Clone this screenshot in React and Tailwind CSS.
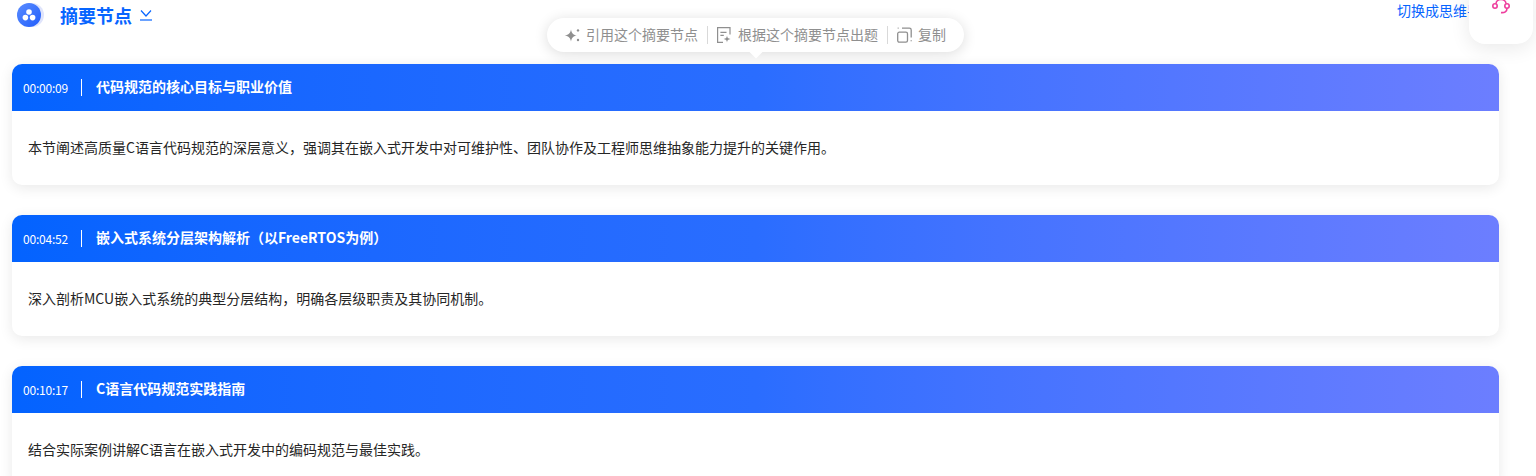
const sections = [
  {
    time: "00:00:09",
    title: "代码规范的核心目标与职业价值",
    text: "本节阐述高质量C语言代码规范的深层意义，强调其在嵌入式开发中对可维护性、团队协作及工程师思维抽象能力提升的关键作用。",
  },
  {
    time: "00:04:52",
    title: "嵌入式系统分层架构解析（以FreeRTOS为例）",
    text: "深入剖析MCU嵌入式系统的典型分层结构，明确各层级职责及其协同机制。",
  },
  {
    time: "00:10:17",
    title: "C语言代码规范实践指南",
    text: "结合实际案例讲解C语言在嵌入式开发中的编码规范与最佳实践。",
  },
];

function LogoIcon() {
  return (
    <div className="relative w-[27px] h-[24px] shrink-0">
      <div className="absolute left-[3px] top-0 w-[24px] h-[24px] rounded-full bg-[#dfe4fb]" />
      <div className="absolute left-0 top-0 w-[24px] h-[24px] rounded-full bg-gradient-to-br from-[#5b8cff] to-[#1f5cfb] flex items-center justify-center">
        <svg width="14" height="12" viewBox="0 0 14 12" fill="white">
          <circle cx="7" cy="3" r="2.8" />
          <circle cx="3.4" cy="8.6" r="2.8" />
          <circle cx="10.6" cy="8.6" r="2.8" />
        </svg>
      </div>
    </div>
  );
}

function SparkIcon() {
  return (
    <svg width="17" height="17" viewBox="0 0 17 17" fill="#8f8f8f">
      <path d="M7 2.5 C7.6 6 9 7.6 12.6 8.5 C9 9.4 7.6 11 7 14.5 C6.4 11 5 9.4 0.6 8.5 C5 7.6 6.4 6 7 2.5Z" />
      <circle cx="14" cy="3.4" r="1.2" />
      <circle cx="14" cy="13" r="1.2" />
    </svg>
  );
}

function QuizIcon() {
  return (
    <svg width="15" height="16" viewBox="0 0 15 16" fill="none" stroke="#8f8f8f" strokeWidth="1.2">
      <path d="M6 15.4H0.6V0.6H13V7.4" />
      <path d="M3.4 5.4H9.5M3.4 8.4H6.8" />
      <path d="M10 8.6C10.3 10.8 11 11.6 13.6 12C11 12.4 10.3 13.2 10 15.6C9.7 13.2 9 12.4 6.6 12C9 11.6 9.7 10.8 10 8.6Z" fill="#8f8f8f" stroke="none" />
    </svg>
  );
}

function CopyIcon() {
  return (
    <svg width="15" height="16" viewBox="0 0 15 16" fill="none" stroke="#8f8f8f" strokeWidth="1.3">
      <rect x="0.7" y="5.2" width="9.8" height="10" rx="1.6" />
      <path d="M5 1.2H12.4C13.4 1.2 14.2 2 14.2 3V10.6" />
      <path d="M0.7 1.2H1.6M14.2 13.2V14.2" />
    </svg>
  );
}

function Toolbar() {
  return (
    <div className="absolute left-[547px] top-[18px] z-10 h-[34px] w-[417px] rounded-[17px] bg-white shadow-[0_2px_14px_rgba(0,0,0,0.14)] flex items-center pl-[17px] text-[14px] text-[#8f8f8f]">
      <div className="flex items-center gap-[5px]">
        <SparkIcon />
        <span className="mb-[2px]">引用这个摘要节点</span>
      </div>
      <div className="mx-[9px] w-px h-[18px] bg-[#d9d9d9]" />
      <div className="flex items-center gap-[6px]">
        <QuizIcon />
        <span className="mb-[2px]">根据这个摘要节点出题</span>
      </div>
      <div className="mx-[9px] w-px h-[18px] bg-[#d9d9d9]" />
      <div className="flex items-center gap-[6px]">
        <CopyIcon />
        <span className="mb-[2px]">复制</span>
      </div>
      <div className="absolute left-[203px] bottom-[-4px] w-[12px] h-[12px] rotate-45 bg-white" />
    </div>
  );
}

function FloatWidget() {
  return (
    <div className="absolute right-[3px] top-[-20px] z-10 w-[64px] h-[64px] rounded-[16px] bg-white shadow-[0_4px_20px_rgba(0,0,0,0.09)] flex justify-center">
      <svg className="mt-[16px]" width="18" height="18" viewBox="0 0 18 18" fill="none" stroke="#ee3f9e" strokeWidth="1.6">
        <circle cx="3" cy="10" r="2.2" />
        <circle cx="15" cy="10" r="2.2" />
        <path d="M4 7.8C4 2 14 2 14 7.8" />
        <path d="M15 12.2C15 15.6 12.6 17 9 16.6" />
      </svg>
    </div>
  );
}

function SectionCard({ time, title, text }) {
  return (
    <div className="rounded-[10px] bg-white shadow-[0_3px_14px_rgba(0,0,0,0.09)] overflow-hidden shrink-0">
      <div className="h-[47px] flex items-center bg-gradient-to-r from-[#0363ff] via-[#2a6dff] to-[#6c7eff] text-white">
        <span className="w-[69px] pl-[11px] text-[12px] tracking-[-0.2px]">{time}</span>
        <div className="w-px h-[17px] bg-white" />
        <span className="ml-[14px] mb-[2px] text-[14px] font-bold">{title}</span>
      </div>
      <div className="h-[74px] flex items-center px-[16px] pb-[2px] text-[14px] text-[#262626]">{text}</div>
    </div>
  );
}

export default function App() {
  return (
    <div
      className="relative h-[476px] overflow-hidden bg-white"
      style={{ fontFamily: '"Noto Sans CJK SC", "Noto Sans", sans-serif' }}
    >
      <div className="h-[64px] pl-[17px] pr-[41px] flex items-start justify-between">
        <div className="flex items-center h-[30px]">
          <LogoIcon />
          <span className="ml-[16px] text-[18px] font-bold text-[#0765ff]">摘要节点</span>
          <svg className="ml-[7px]" width="14" height="14" viewBox="0 0 14 14" fill="none" stroke="#0765ff" strokeWidth="1.2">
            <path d="M2 2.5L7 8L12 2.5" />
            <path d="M1 12H13" />
          </svg>
        </div>
        <span className="text-[14px] text-[#0765ff]">切换成思维导图</span>
      </div>
      <div className="w-[1487px] ml-[12px] flex flex-col gap-[30px]">
        {sections.map((s) => (
          <SectionCard key={s.time} {...s} />
        ))}
      </div>
      <Toolbar />
      <FloatWidget />
    </div>
  );
}
